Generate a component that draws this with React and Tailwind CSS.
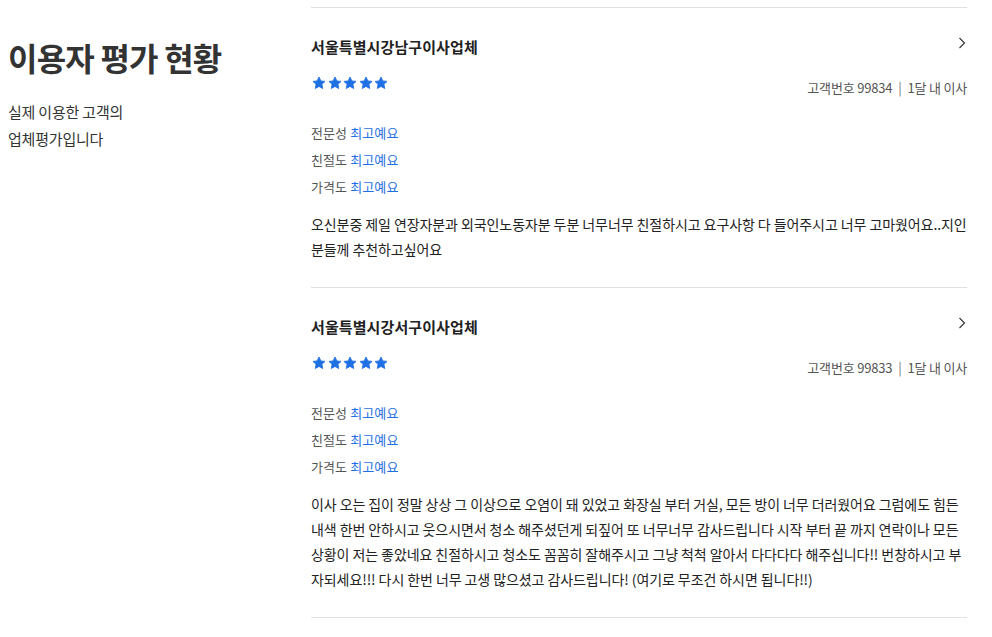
const REVIEWS = [
  {
    company: "서울특별시강남구이사업체",
    no: "99834",
    when: "1달 내 이사",
    body: "오신분중 제일 연장자분과 외국인노동자분 두분 너무너무 친절하시고 요구사항 다 들어주시고 너무 고마웠어요..지인분들께 추천하고싶어요",
  },
  {
    company: "서울특별시강서구이사업체",
    no: "99833",
    when: "1달 내 이사",
    body: "이사 오는 집이 정말 상상 그 이상으로 오염이 돼 있었고 화장실 부터 거실, 모든 방이 너무 더러웠어요 그럼에도 힘든 내색 한번 안하시고 웃으시면서 청소 해주셨던게 되짚어 또 너무너무 감사드립니다 시작 부터 끝 까지 연락이나 모든 상황이 저는 좋았네요 친절하시고 청소도 꼼꼼히 잘해주시고 그냥 척척 알아서 다다다다 해주십니다!! 번창하시고 부자되세요!!! 다시 한번 너무 고생 많으셨고 감사드립니다! (여기로 무조건 하시면 됩니다!!)",
  },
];

const RATINGS = ["전문성", "친절도", "가격도"];

function Star() {
  return (
    <svg width="14" height="14" viewBox="0 0 24 24" className="shrink-0">
      <path
        d="M12 1.8l3.1 6.6 7.2.9-5.3 5 1.4 7.1L12 17.9l-6.4 3.5 1.4-7.1-5.3-5 7.2-.9z"
        fill="#1f6fe5"
        stroke="#1f6fe5"
        strokeWidth="1.5"
        strokeLinejoin="round"
      />
    </svg>
  );
}

function Review({ item }) {
  return (
    <div className="border-b border-[#e0e0e0] pt-[29px] pb-[25px]">
      <div className="flex items-center justify-between h-5">
        <div className="text-[15px] font-bold text-[#222] tracking-[0.1px] leading-5">{item.company}</div>
        <svg width="8" height="12" viewBox="0 0 8 12" className="-mt-2 mr-[1px]">
          <polyline points="1.5,1 6.5,6 1.5,11" fill="none" stroke="#333" strokeWidth="1.1" />
        </svg>
      </div>

      <div className="mt-5 flex items-start justify-between h-5">
        <div className="flex gap-[1.5px] pl-[1px] -mt-[1px]">
          <Star /><Star /><Star /><Star /><Star />
        </div>
        <div className="text-[13px] text-[#555] tracking-[-0.2px] leading-5 mt-[1px]">
          고객번호 {item.no}
          <span className="mx-[6px] text-[#777]">|</span>
          {item.when}
        </div>
      </div>

      <div className="mt-[22px]">
        {RATINGS.map((r) => (
          <div key={r} className="text-[13px] leading-[27px] text-[#555] tracking-[0.1px]">
            {r} <span className="text-[#1f6fe5]">최고예요</span>
          </div>
        ))}
      </div>

      <p className="mt-[12px] text-[14px] leading-[25px] text-[#222] tracking-[-0.08px]">{item.body}</p>
    </div>
  );
}

export default function App() {
  return (
    <div
      className="flex bg-white min-h-[637px] pt-[7px] pl-2"
      style={{ fontFamily: '"Noto Sans CJK KR", "Noto Sans", sans-serif' }}
    >
      <div className="w-[303px] shrink-0 pt-[30px]">
        <h1 className="text-[32px] leading-10 font-bold text-[#333] tracking-[-0.8px]">이용자 평가 현황</h1>
        <p className="mt-[21px] text-[15px] leading-[27px] text-[#333] tracking-[-0.2px]">
          실제 이용한 고객의
          <br />
          업체평가입니다
        </p>
      </div>

      <div className="w-[656px] shrink-0 border-t border-[#e0e0e0]">
        {REVIEWS.map((item) => (
          <Review key={item.no} item={item} />
        ))}
      </div>
    </div>
  );
}
